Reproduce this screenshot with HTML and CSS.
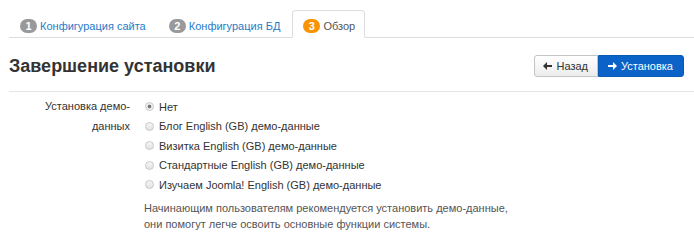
FILE: index.html
```html
<!DOCTYPE html>
<html lang="ru">
<head>
  <meta charset="UTF-8">
  <title>Установка Joomla</title>
  <link rel="stylesheet" href="styles.css">
</head>
<body>
  <!-- Steps -->
  <ul class="nav-tabs">
    <li><a href="#"><span class="badge">1</span> Конфигурация сайта</a></li>
    <li><a href="#"><span class="badge">2</span> Конфигурация БД</a></li>
    <li class="active"><a href="#"><span class="badge badge-warning">3</span> Обзор</a></li>
  </ul>

  <!-- Header -->
  <div class="page-head">
    <h3>Завершение установки</h3>
    <div class="btn-group">
      <a href="#" class="btn">
        <svg class="icon-arrow" viewBox="0 0 9 8"><path d="M0 4 L4 0 V3 H9 V5 H4 V8 Z"/></svg>
        Назад
      </a>
      <a href="#" class="btn btn-primary">
        <svg class="icon-arrow" viewBox="0 0 9 8"><path d="M9 4 L5 0 V3 H0 V5 H5 V8 Z"/></svg>
        Установка
      </a>
    </div>
  </div>
  <hr class="divider">

  <!-- Sample data -->
  <div class="control-group">
    <div class="control-label">Установка демо-данных</div>
    <div class="controls">
      <label class="radio"><input type="radio" name="sample" checked> Нет</label>
      <label class="radio"><input type="radio" name="sample"> Блог English (GB) демо-данные</label>
      <label class="radio"><input type="radio" name="sample"> Визитка English (GB) демо-данные</label>
      <label class="radio"><input type="radio" name="sample"> Стандартные English (GB) демо-данные</label>
      <label class="radio"><input type="radio" name="sample"> Изучаем Joomla! English (GB) демо-данные</label>
      <p class="help-block">Начинающим пользователям рекомендуется установить демо-данные,<br>они помогут легче освоить основные функции системы.</p>
    </div>
  </div>
</body>
</html>
```
FILE: styles.css
```css
* {
  box-sizing: border-box;
}

body {
  margin: 0;
  padding: 10px 0 0 9px;
  font-family: "Liberation Sans", Arial, sans-serif;
  font-size: 11px;
  line-height: 18px;
  color: #333333;
  background: #ffffff;
}

a {
  text-decoration: none;
}

/* Tabs */
.nav-tabs {
  list-style: none;
  margin: 0;
  padding: 0;
  display: flex;
  border-bottom: 1px solid #dddddd;
}

.nav-tabs li {
  margin-bottom: -1px;
  margin-right: 2px;
}

.nav-tabs a {
  display: block;
  padding: 6px 9px 2px 10px;
  height: 28px;
  line-height: 18px;
  color: #1f7bc8;
  border: 1px solid transparent;
  border-radius: 4px 4px 0 0;
}

.nav-tabs .active a {
  color: #555555;
  background: #ffffff;
  border-color: #dddddd #dddddd transparent;
}

.badge {
  display: inline-block;
  padding: 0 5px;
  min-width: 17px;
  height: 14px;
  line-height: 14px;
  font-size: 11px;
  font-weight: bold;
  text-align: center;
  color: #ffffff;
  background: #999999;
  border-radius: 8px;
  vertical-align: 0;
}

.badge-warning {
  background: #f89406;
}

/* Header */
.page-head {
  display: flex;
  justify-content: space-between;
  align-items: center;
  padding-right: 10px;
  margin-top: 17px;
}

.page-head h3 {
  margin: 0;
  font-size: 18px;
  line-height: 22px;
  font-weight: bold;
  color: #333333;
}

.btn-group {
  display: flex;
}

.btn {
  display: flex;
  align-items: center;
  gap: 4px;
  height: 22px;
  padding: 0 9px 0 8px;
  font-size: 11px;
  color: #333333;
  background: linear-gradient(#ffffff, #ececec);
  border: 1px solid #c4c4c4;
  border-radius: 3px 0 0 3px;
}

.btn-primary {
  padding: 0 10px 0 9px;
  color: #ffffff;
  background: #0b63c7;
  border-color: #0a59b4;
  border-radius: 0 3px 3px 0;
}

.icon-arrow {
  width: 9px;
  height: 8px;
  fill: currentColor;
}

.divider {
  margin: 14px 0 0;
  border: 0;
  border-top: 1px solid #e5e5e5;
}

/* Form */
.control-group {
  display: flex;
  margin-top: 5px;
}

.control-label {
  width: 121px;
  text-align: right;
  line-height: 20px;
  margin-top: -1px;
}

.controls {
  margin-left: 14px;
}

.radio {
  display: flex;
  align-items: center;
  height: 19.5px;
  padding-left: 1px;
}

.radio input {
  appearance: none;
  width: 9px;
  height: 9px;
  margin: 0 5px 0 0;
  border: 1px solid #c8c8c8;
  border-radius: 50%;
  background: linear-gradient(#f6f6f6, #e2e2e2);
}

.radio input:checked {
  background: radial-gradient(circle, #777777 0, #777777 1.6px, #eeeeee 2.2px);
}

.help-block {
  margin: 5px 0 0;
  color: #555555;
  line-height: 16px;
}
```
